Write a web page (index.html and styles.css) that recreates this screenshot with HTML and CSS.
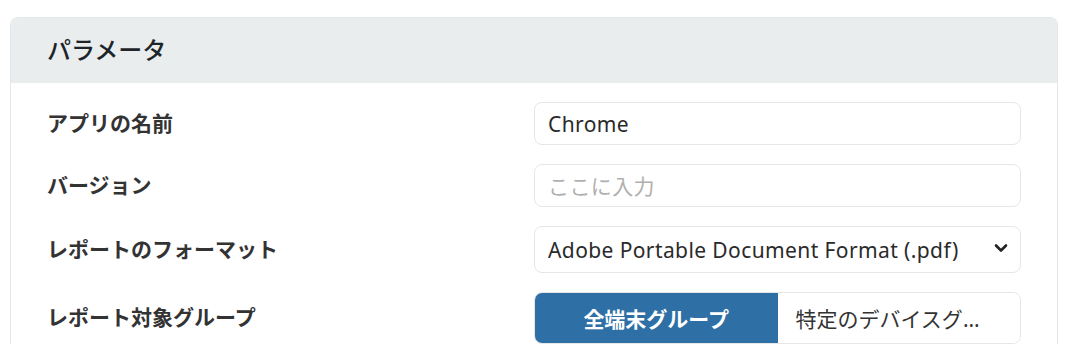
FILE: index.html
```html
<!DOCTYPE html>
<html lang="ja">
<head>
    <meta charset="UTF-8">
    <meta name="viewport" content="width=device-width, initial-scale=1.0">
    <title>パラメータ</title>
    <link rel="stylesheet" href="styles.css">
</head>
<body>
    <div class="param-card">
        <div class="param-header">
            <h2>パラメータ</h2>
        </div>

        <form class="param-form">
            <!-- App name -->
            <label class="param-label" for="appName">アプリの名前</label>
            <input class="param-input" type="text" id="appName" value="Chrome">

            <!-- Version -->
            <label class="param-label" for="version">バージョン</label>
            <input class="param-input" type="text" id="version" placeholder="ここに入力">

            <!-- Report format -->
            <label class="param-label" for="format">レポートのフォーマット</label>
            <div class="select-wrap">
                <select class="param-input param-select" id="format">
                    <option>Adobe Portable Document Format (.pdf)</option>
                    <option>Microsoft Excel (.xlsx)</option>
                    <option>CSV (.csv)</option>
                </select>
                <svg class="select-arrow" width="14" height="10" viewBox="0 0 14 10">
                    <path d="M2 2.5 L7 7.5 L12 2.5" fill="none" stroke="#222" stroke-width="2.6" stroke-linecap="round" stroke-linejoin="round"/>
                </svg>
            </div>

            <!-- Target group -->
            <span class="param-label">レポート対象グループ</span>
            <div class="segmented">
                <button type="button" class="seg-btn active">全端末グループ</button>
                <button type="button" class="seg-btn" title="特定のデバイスグループ">特定のデバイスグループ</button>
            </div>
        </form>
    </div>
</body>
</html>
```

FILE: styles.css
```css
* {
    box-sizing: border-box;
    font-family: 'Noto Sans', 'Noto Sans CJK JP', sans-serif;
}

body {
    margin: 0;
    padding: 17px 8px 0 10px;
    background: #ffffff;
    color: #333;
    font-size: 21px;
}

.param-card {
    border: 1px solid #e4e7e9;
    border-bottom: none;
    border-radius: 8px 8px 0 0;
    overflow: hidden;
}

.param-header {
    background: #e9edee;
    height: 65px;
    padding: 0 36px 4px;
    display: flex;
    align-items: center;
}

.param-header h2 {
    margin: 0;
    font-size: 24px;
    font-weight: 500;
    color: #1d2529;
}

.param-form {
    display: grid;
    grid-template-columns: 1fr 1fr;
    row-gap: 19px;
    align-items: center;
    padding: 19px 36px 0 36px;
}

.param-label {
    font-size: 21px;
    font-weight: 700;
    color: #333;
    padding-bottom: 4px;
}

.param-input {
    width: 100%;
    height: 43px;
    border: 1px solid #e6e6e6;
    border-radius: 8px;
    padding: 0 13px;
    font-size: 21px;
    letter-spacing: 0.4px;
    color: #2a2a2a;
    background: #fff;
    outline: none;
}

.param-input::placeholder {
    color: #b0b0b0;
}

.select-wrap {
    position: relative;
}

.param-select {
    height: 47px;
    appearance: none;
    -webkit-appearance: none;
    padding-right: 40px;
}

.select-arrow {
    position: absolute;
    right: 13px;
    top: 17px;
    pointer-events: none;
}

.segmented {
    display: grid;
    grid-template-columns: 1fr 1fr;
    height: 52px;
    border: 1px solid #e6e6e6;
    border-radius: 8px;
    overflow: hidden;
}

.seg-btn {
    border: none;
    background: #fff;
    color: #333;
    font-size: 21px;
    padding: 0 30px 0 18px;
    white-space: nowrap;
    overflow: hidden;
    text-overflow: ellipsis;
    cursor: pointer;
}

.seg-btn.active {
    background: #2e70a6;
    color: #fff;
    font-weight: 700;
    padding: 0 18px;
}
```
